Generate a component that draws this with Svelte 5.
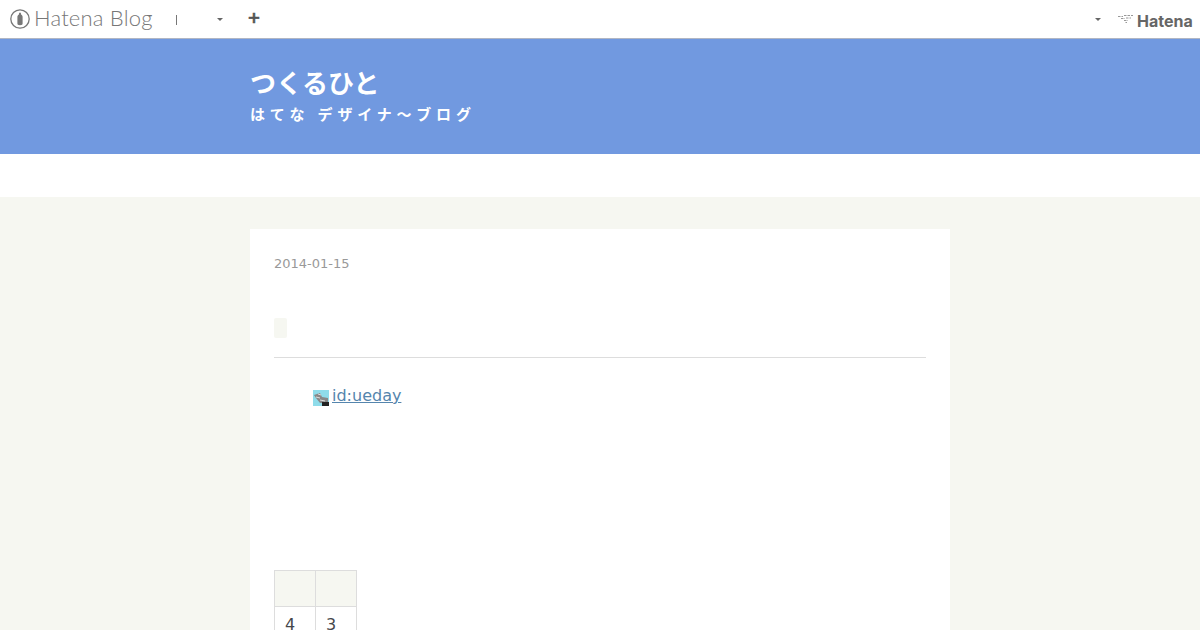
<script>
  const cols = ['4', '3'];
</script>

<div class="page">
  <nav class="topbar">
    <div class="left">
      <svg class="mark" viewBox="0 0 20 20" width="20" height="20">
        <circle cx="10" cy="10" r="9.2" fill="none" stroke="#777" stroke-width="1.3" />
        <path d="M10 3.600c.9 0 1.100 1.200 1.100 1.800.9.6 1.500 1.300 1.500 2.400v6.800c0 1-.6 1.600-2.600 1.600s-2.600-.6-2.600-1.600V7.800c0-1.100.6-1.800 1.500-2.400 0-.6.200-1.800 1.100-1.800z" fill="#777" />
      </svg>
      <span class="brand">Hatena Blog</span>
      <span class="sep"></span>
      <span class="caret first"></span>
      <span class="plus">+</span>
    </div>
    <div class="right">
      <span class="caret"></span>
      <svg class="burst" viewBox="0 0 16 10" width="16" height="10">
        <path d="M0 2.500h5M6 1.500h9M3 4.500h4M8 4h5M6 6.500h4M7.500 8.500h1.500" stroke="#999" stroke-width="1" stroke-dasharray="2.500 1" fill="none" />
      </svg>
      <span class="hatena">Hatena</span>
    </div>
  </nav>

  <header class="hero">
    <div class="hero-inner">
      <h1>つくるひと</h1>
      <p>はてな デザイナ〜ブログ</p>
    </div>
  </header>

  <div class="gap"></div>

  <main class="content">
    <article class="card">
      <time>2014-01-15</time>
      <div class="title-row"><span class="chip"></span></div>
      <div class="author">
        <svg class="avatar" viewBox="0 0 16 16" width="16" height="16">
          <rect width="16" height="16" fill="#8fdcea" />
          <path d="M1 5l6-2 2 4 6 1v5H7L3 8z" fill="#888" />
          <path d="M5 4l3 1M3 7l4 1M7 10l5 1" stroke="#ddd" stroke-width="1" />
          <path d="M9 12h7v4H9z" fill="#222" />
        </svg><a href="#top">id:ueday</a>
      </div>
      <table>
        <thead>
          <tr><th></th><th></th></tr>
        </thead>
        <tbody>
          <tr>
            {#each cols as c}<td>{c}</td>{/each}
          </tr>
        </tbody>
      </table>
    </article>
  </main>
</div>

<style>
  :global(body) {
    margin: 0;
    background: #f6f7f1;
    overflow: hidden;
  }
  .page {
    height: 630px;
    overflow: hidden;
    font-family: "DejaVu Sans", sans-serif;
    color: #45474b;
  }
  .topbar {
    height: 39px;
    box-sizing: border-box;
    background: #fff;
    border-bottom: 1px solid #b0b6c4;
    display: flex;
    justify-content: space-between;
    align-items: center;
  }
  .left, .right {
    display: flex;
    align-items: center;
  }
  .left { padding-left: 10px; }
  .right { padding-right: 7px; }
  .brand {
    margin-left: 4px;
    width: 118px;
    margin-top: -3px;
    font: 300 22px/1 Lato, "Liberation Sans", sans-serif;
    letter-spacing: 0.2px;
    color: #777;
    white-space: nowrap;
  }
  .sep {
    width: 1px;
    height: 10px;
    background: #777;
    margin-left: 24px;
    margin-top: 2px;
  }
  .caret {
    width: 0;
    height: 0;
    border-left: 3px solid transparent;
    border-right: 3px solid transparent;
    border-top: 3px solid #666;
    margin-top: 1px;
  }
  .caret.first { margin-left: 40px; }
  .plus {
    margin-left: 24px;
    width: 14px;
    text-align: center;
    margin-top: -2px;
    font: 900 16px/1 "DejaVu Sans", sans-serif;
    -webkit-text-stroke: 0.5px #555;
    color: #555;
  }
  .burst { margin-left: 17px; }
  .hatena {
    width: 56px;
    margin-left: 3px;
    margin-top: 3px;
    font: 700 16px/1 Inter, "Liberation Sans", sans-serif;
    color: #666;
    white-space: nowrap;
  }
  .hero {
    height: 115px;
    background: #7199e0;
    color: #fff;
  }
  .hero-inner {
    width: 700px;
    margin: 0 auto;
    padding-top: 25px;
  }
  h1 {
    margin: 0;
    font: 700 26px/36px "Noto Sans CJK JP", sans-serif;
    letter-spacing: 0.2px;
  }
  .hero p {
    margin: 4px 0 0;
    font: 700 15px/20px "Noto Sans CJK JP", sans-serif;
    letter-spacing: 4.800px;
  }
  .gap {
    height: 43px;
    background: #fff;
  }
  .content {
    padding-top: 32px;
  }
  .card {
    width: 700px;
    height: 420px;
    box-sizing: border-box;
    margin: 0 auto;
    background: #fff;
    padding: 25px 24px 24px;
  }
  time {
    display: block;
    font-size: 13px;
    line-height: 20px;
    color: #999;
  }
  .title-row {
    height: 20px;
    margin-top: 44px;
    padding-bottom: 19px;
    border-bottom: 1px solid #ddd;
  }
  .chip {
    display: block;
    width: 13px;
    height: 20px;
    background: #f6f7f1;
    border-radius: 2px;
  }
  .author {
    display: flex;
    align-items: center;
    margin-top: 26px;
    padding-left: 39px;
    font-size: 16px;
    line-height: 24px;
  }
  .avatar { margin-top: 3px; margin-right: 3px; }
  a { color: #5585ad; }
  table {
    margin-top: 162px;
    border-collapse: collapse;
    font-size: 16px;
  }
  th, td {
    border: 1px solid #ddd;
    width: 41px;
    min-width: 41px;
    padding: 0;
    box-sizing: border-box;
    text-align: left;
  }
  th {
    height: 36px;
    background: #f6f7f1;
  }
  td {
    height: 36px;
    padding-left: 10px;
  }
</style>
